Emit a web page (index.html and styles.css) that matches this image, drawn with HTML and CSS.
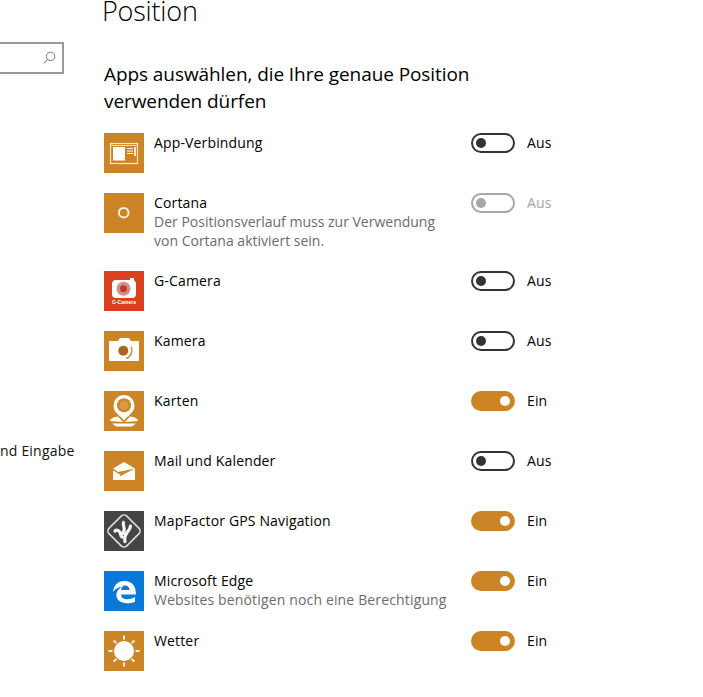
FILE: index.html
```html
<!DOCTYPE html>
<html lang="de">
<head>
<meta charset="utf-8">
<title>Position</title>
<link rel="stylesheet" href="styles.css">
</head>
<body>
<div class="page">
  <aside class="side">
    <div class="search">
      <svg class="search-icon" width="14" height="14" viewBox="0 0 14 14"><circle cx="8.600" cy="5.400" r="4.200" fill="none" stroke="#777" stroke-width="1"/><path d="M5.500 8.500 2 12.500" stroke="#777" stroke-width="1" fill="none"/></svg>
    </div>
    <div class="nav-item">nd Eingabe</div>
  </aside>
  <main class="content">
    <h1 class="title">Position</h1>
    <h2 class="heading">Apps auswählen, die Ihre genaue Position<br>verwenden dürfen</h2>
    <div class="list">
      <div class="row">
        <div class="icon orange"><svg width="40" height="40" viewBox="0 0 40 40"><rect x="6.500" y="10.500" width="27" height="20" fill="none" stroke="#fbe6c4" stroke-width="1.200"/><path d="M6.500 12.500h27" stroke="#fbe6c4" stroke-width="1"/><rect x="9" y="14" width="12" height="13.500" fill="#fff"/><path d="M23 15.500h6M23 18h6M23 20.500h6" stroke="#fff" stroke-width="1"/><rect x="30" y="14" width="2" height="9" fill="#fde9c8"/></svg></div>
        <div class="info"><div class="name">App-Verbindung</div></div>
        <div class="toggle"><span class="switch"><span class="knob"></span></span><span class="state">Aus</span></div>
      </div>
      <div class="row row-tall">
        <div class="icon orange"><svg width="40" height="40" viewBox="0 0 40 40"><circle cx="19.700" cy="19.700" r="4.800" fill="none" stroke="#fbeeda" stroke-width="2"/></svg></div>
        <div class="info"><div class="name">Cortana</div><div class="note note-tight">Der Positionsverlauf muss zur Verwendung<br>von Cortana aktiviert sein.</div></div>
        <div class="toggle disabled"><span class="switch"><span class="knob"></span></span><span class="state">Aus</span></div>
      </div>
      <div class="row">
        <div class="icon red"><svg width="40" height="40" viewBox="0 0 40 40"><rect x="8" y="9" width="24" height="18" rx="4" fill="#fff"/><rect x="26" y="7" width="4" height="3" fill="#fff"/><circle cx="19.500" cy="17.700" r="7" fill="#cf8f8a"/><circle cx="19.500" cy="17.700" r="3.500" fill="#c23a22"/><text class="gcam" x="20" y="33" text-anchor="middle">G-Camera</text></svg></div>
        <div class="info"><div class="name">G-Camera</div></div>
        <div class="toggle"><span class="switch"><span class="knob"></span></span><span class="state">Aus</span></div>
      </div>
      <div class="row">
        <div class="icon orange"><svg width="40" height="40" viewBox="0 0 40 40"><path d="M5 10h9l2-3h9l2 3h8v20H5z" fill="#fff"/><circle cx="19.300" cy="19.700" r="5" fill="#a8691c"/><path d="M22 27.500a8.500 8.500 0 0 0 5-12" fill="none" stroke="#cb8527" stroke-width="1.300"/></svg></div>
        <div class="info"><div class="name">Kamera</div></div>
        <div class="toggle"><span class="switch"><span class="knob"></span></span><span class="state">Aus</span></div>
      </div>
      <div class="row">
        <div class="icon orange"><svg width="40" height="40" viewBox="0 0 40 40"><path d="M20 30c-2-5-10.500-7-10.500-15.500a10.500 10.500 0 0 1 21 0c0 8.500-8.500 10.500-10.500 15.500z" fill="#fff"/><circle cx="20" cy="14.300" r="7" fill="#cb8527"/><circle cx="20" cy="14.300" r="4.500" fill="#d99a48"/><path d="M6 30c0-2 3-4 8-4.500l5 5.500zM34 30c0-2-3-4-8-4.500l-5 5.500zM8 32.500h24l-4 3H12z" fill="#fff"/></svg></div>
        <div class="info"><div class="name">Karten</div></div>
        <div class="toggle on"><span class="switch"><span class="knob"></span></span><span class="state">Ein</span></div>
      </div>
      <div class="row">
        <div class="icon orange"><svg width="40" height="40" viewBox="0 0 40 40"><path d="M9 17.500 20 11l11 6.500-17 3.500z" fill="#fff"/><path d="M9 19.500l7 4-.5 2 15.500-8V29H9z" fill="#fff"/></svg></div>
        <div class="info"><div class="name">Mail und Kalender</div></div>
        <div class="toggle"><span class="switch"><span class="knob"></span></span><span class="state">Aus</span></div>
      </div>
      <div class="row">
        <div class="icon dark"><svg width="40" height="40" viewBox="0 0 40 40"><rect x="7.500" y="7.500" width="25" height="25" rx="4" transform="rotate(45 20 20)" fill="none" stroke="#dedede" stroke-width="1.600"/><path d="M11 20c2-2 4 0 5 1.500s0 3 2 4.500M21 30.500c-1-4 0-6 2-9s3-3 3.500-6.500M19.500 11.500c-1 3 1.500 5 .5 8-.5 1.500-1 2-1 3" fill="none" stroke="#f4f4f4" stroke-width="3.200" stroke-linecap="round"/></svg></div>
        <div class="info"><div class="name">MapFactor GPS Navigation</div></div>
        <div class="toggle on"><span class="switch"><span class="knob"></span></span><span class="state">Ein</span></div>
      </div>
      <div class="row">
        <div class="icon blue"><svg width="40" height="40" viewBox="0 0 40 40"><path d="M9 21C10 13 15 10 20.500 10 28 10 32 15 32 23.500H17C17 29 25 29.500 31 26V31C27 32.500 23 32.500 21 32 14 31.500 11 26 13 21 14 18.500 16 17 18 16 14 16 11 18 9 21Z" fill="#fff"/><path d="M17 19H25.500C25.500 16 23.500 14.500 21 14.500 19 14.500 17.500 16.500 17 19Z" fill="#0a78d7"/></svg></div>
        <div class="info"><div class="name">Microsoft Edge</div><div class="note">Websites benötigen noch eine Berechtigung</div></div>
        <div class="toggle on"><span class="switch"><span class="knob"></span></span><span class="state">Ein</span></div>
      </div>
      <div class="row">
        <div class="icon orange"><svg width="40" height="40" viewBox="0 0 40 40"><circle cx="20" cy="20" r="10" fill="#fff"/><path d="M20 4.500v4M20 31.500v4M4.500 20h4M31.500 20h4M9.500 9.500l3 2.500M30.500 9.500l-3 2.500M9.500 30.500l3-2.500M30.500 30.500l-3-2.500" stroke="#fbeeda" stroke-width="2" fill="none"/></svg></div>
        <div class="info"><div class="name">Wetter</div></div>
        <div class="toggle on"><span class="switch"><span class="knob"></span></span><span class="state">Ein</span></div>
      </div>
    </div>
  </main>
</div>
</body>
</html>
```
FILE: styles.css
```css
* { box-sizing: border-box; }
html, body { margin: 0; padding: 0; background: #fff; }
body { width: 703px; height: 697px; overflow: hidden; font-family: "Open Sans", "Liberation Sans", sans-serif; color: #000; }
.page { display: flex; height: 697px; }
.side { width: 102px; flex: none; display: flex; flex-direction: column; padding-top: 42px; }
.search { width: 64px; height: 32px; border: 2px solid #999; border-left: 0; display: flex; align-items: center; justify-content: flex-end; padding-right: 6px; }
.nav-item { margin-top: 367px; font-size: 14px; line-height: 19px; letter-spacing: 0.2px; color: #111; white-space: nowrap; }
.content { flex: 1; }
.title { margin: 0; font-size: 27px; line-height: 22px; font-weight: 300; letter-spacing: -0.2px; }
.heading { margin: 39px 0 0 2px; font-size: 19px; line-height: 27px; font-weight: 400; letter-spacing: -0.08px; }
.list { margin: 18px 0 0 2px; }
.row { display: flex; height: 60px; align-items: flex-start; }
.row-tall { height: 78px; }
.icon { width: 40px; height: 40px; flex: none; }
.icon svg { display: block; }
.orange { background: #cb8527; }
.red { background: #d9401f; }
.dark { background: #454545; }
.blue { background: #0a78d7; }
.gcam { font: 700 5px "Liberation Sans", sans-serif; fill: #fff; }
.info { width: 317px; flex: none; margin-left: 10px; }
.name { font-size: 14px; line-height: 19px; letter-spacing: 0.15px; }
.note { font-size: 14px; line-height: 19px; letter-spacing: 0.15px; color: #6b6b6b; }
.note-tight { letter-spacing: 0; }
.toggle { display: flex; align-items: center; font-size: 14px; letter-spacing: 0.15px; }
.switch { width: 44px; height: 20px; border: 2px solid #333; border-radius: 10px; display: flex; align-items: center; padding: 0 3px; }
.knob { width: 10px; height: 10px; border-radius: 50%; background: #333; }
.state { margin-left: 12px; line-height: 20px; }
.on .switch { background: #cb8527; border-color: #cb8527; justify-content: flex-end; }
.on .knob { background: #fff; }
.disabled .switch { border-color: #a6a6a6; }
.disabled .knob { background: #a6a6a6; }
.disabled .state { color: #a6a6a6; }
```
